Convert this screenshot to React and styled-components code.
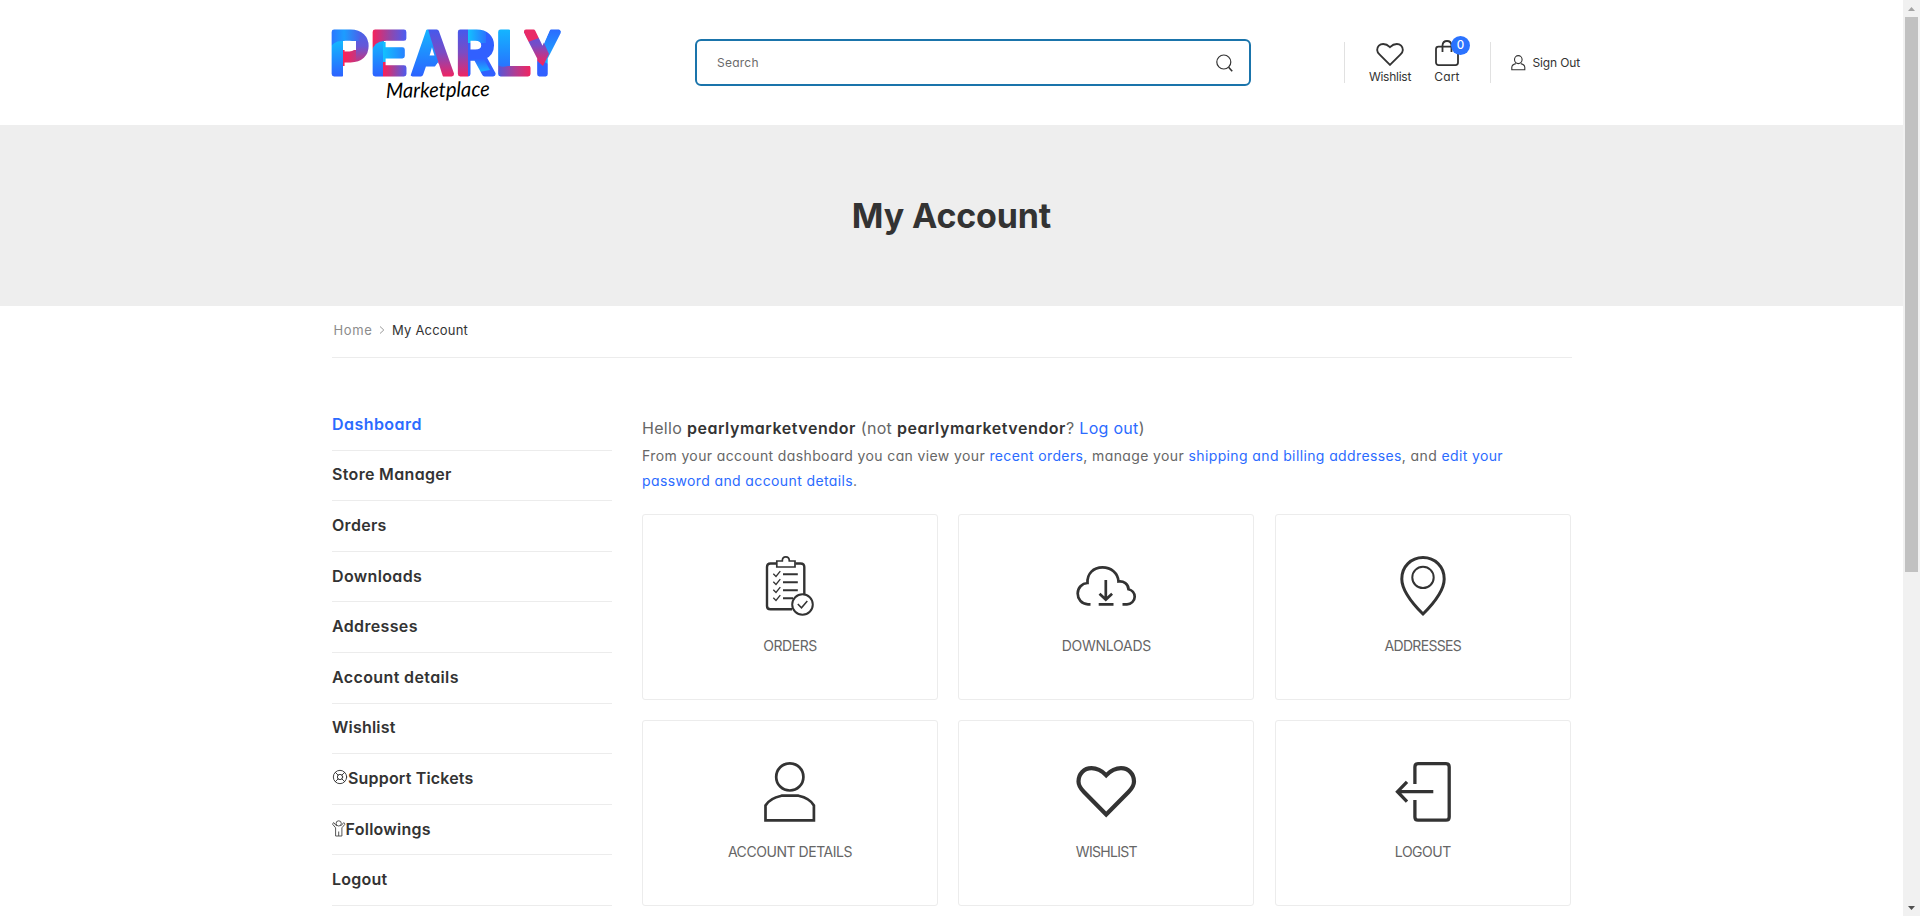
import React from "react";
import styled, { createGlobalStyle } from "styled-components";
import { LifeBuoy } from "lucide-react";

const GlobalStyle = createGlobalStyle`
  * { box-sizing: border-box; }
  html, body { margin: 0; height: 100%; overflow: hidden; background: #fff; }
  body {
    font-family: Inter, "Liberation Sans", sans-serif;
    font-feature-settings: "cv11";
    color: #666;
  }
  a { color: #2b6bff; text-decoration: none; }
`;

const Viewport = styled.div`
  display: flex;
  height: 916px;
  overflow: hidden;
`;

const Page = styled.div`
  flex: 1;
  min-width: 0;
`;

const Header = styled.header`
  display: flex;
  align-items: center;
  height: 125px;
  padding-left: 332px;
`;

const LogoArt = styled.svg`
  display: block;
  flex: none;
  width: 234px;
  height: 80px;
  margin-top: 11px;
  overflow: visible;
`;

const SearchBox = styled.div`
  display: flex;
  align-items: center;
  justify-content: space-between;
  width: 556px;
  height: 47px;
  margin-left: 129px;
  padding: 0 16px 0 20px;
  border: 2px solid #1a74ab;
  border-radius: 6px;
  font-size: 12px;
  letter-spacing: 0.25px;
  color: #6a6a6a;
`;

const Separator = styled.span`
  width: 1px;
  height: 41px;
  margin-left: ${(p) => p.$gap}px;
  background: #e1e1e1;
`;

const HeaderAction = styled.div`
  display: flex;
  flex-direction: column;
  align-items: center;
  width: ${(p) => p.$width}px;
  margin-left: ${(p) => p.$gap}px;
`;

const ActionIcon = styled.div`
  position: relative;
  display: flex;
  align-items: flex-end;
  height: 26px;
`;

const ActionLabel = styled.span`
  margin-top: 3px;
  font-size: 12px;
  line-height: 16px;
  letter-spacing: ${(p) => p.$spacing}px;
  color: #333;
  white-space: nowrap;
`;

const Badge = styled.span`
  position: absolute;
  top: -4px;
  right: -11px;
  width: 19px;
  height: 19px;
  border-radius: 50%;
  background: #2b73ff;
  color: #fff;
  font-size: 11.5px;
  font-weight: 500;
  line-height: 19px;
  text-align: center;
`;

const SignOut = styled.div`
  display: flex;
  align-items: center;
  gap: 6.5px;
  margin-left: 20px;
  font-size: 12px;
  letter-spacing: -0.15px;
  color: #333;
  white-space: nowrap;
`;

const Banner = styled.section`
  display: flex;
  align-items: center;
  justify-content: center;
  height: 181px;
  background: #eee;
`;

const Title = styled.h1`
  margin: 1px 0 0;
  font-size: 34px;
  font-weight: 700;
  line-height: 40px;
  letter-spacing: -0.15px;
  color: #333;
`;

const Container = styled.div`
  width: 1240px;
  margin-left: 332px;
`;

const Breadcrumb = styled.nav`
  display: flex;
  align-items: center;
  height: 52px;
  padding: 0 0 3px 1.5px;
  border-bottom: 1px solid #ececec;
  font-size: 13px;
`;

const Crumb = styled.span`
  letter-spacing: ${(p) => (p.$current ? 0.2 : 0.65)}px;
  color: ${(p) => (p.$current ? "#333" : "#8c8c8c")};
`;

const CrumbArrow = styled.svg`
  width: 6px;
  height: 8px;
  margin: 0 7.5px 0 6px;
`;

const Columns = styled.div`
  display: flex;
  padding-top: 42.1px;
`;

const SideNav = styled.nav`
  width: 280px;
  margin-right: 30px;
`;

const NavItem = styled.div`
  display: flex;
  align-items: center;
  height: 50.58px;
  padding-bottom: 2px;
  border-bottom: 1px solid #ececec;
  font-size: 16px;
  font-weight: 600;
  letter-spacing: ${(p) => p.$spacing}px;
  color: ${(p) => (p.$active ? "#2b6bff" : "#333")};
  svg { margin-top: -1px; }
`;

const Content = styled.main`
  width: 929px;
  padding-top: 14.9px;
`;

const Greeting = styled.p`
  margin: 0;
  font-size: 16px;
  line-height: 27px;
  letter-spacing: 0.3px;
  strong {
    font-weight: 600;
    letter-spacing: 0.54px;
    color: #333;
  }
`;

const Intro = styled.p`
  margin: 1px 0 21px;
  font-size: 14px;
  line-height: 25px;
  letter-spacing: 0.38px;
`;

const CardGrid = styled.div`
  display: grid;
  grid-template-columns: repeat(3, 296px);
  gap: 20px 20.4px;
`;

const Card = styled.div`
  display: flex;
  flex-direction: column;
  align-items: center;
  height: 186px;
  padding-top: 41px;
  border: 1px solid #ececec;
  border-radius: 3px;
`;

const CardIcon = styled.svg`
  width: 60px;
  height: 60px;
  overflow: visible;
  fill: none;
  stroke: #333;
  stroke-width: ${(p) => p.$stroke};
`;

const CardLabel = styled.span`
  margin-top: 20px;
  font-size: 14px;
  line-height: 20px;
  letter-spacing: ${(p) => p.$spacing}px;
  color: #666;
`;

const Scrollbar = styled.aside`
  display: flex;
  flex-direction: column;
  align-items: center;
  width: 17px;
  background: #f1f1f1;
`;

const ScrollArrow = styled.svg`
  width: 17px;
  height: 17px;
  fill: ${(p) => (p.$dim ? "#a3a3a3" : "#505050")};
`;

const ScrollThumb = styled.div`
  width: 13px;
  height: 555px;
  margin-bottom: auto;
  background: #c1c1c1;
`;

const gradients = [
  ["blueDown", 0, 1, ["#12bdff", "#1f8dff", "#2f5cff"]],
  ["pTop", 1, 0, ["#2f6bff", "#1c9dff", "#4a62ea"]],
  ["pBowl", 0, 1, ["#3f66ee", "#6558d8", "#e02a67"]],
  ["redBlue", 1, 0, ["#ff1f55", "#9347a8", "#3f60ff"]],
  ["cyanBlue", 1, 0, ["#12c2ff", "#2b74ff"]],
  ["blueRed", 0, 1, ["#3a5cf5", "#7a4cc4", "#ff1f55"]],
  ["redDiag", 1, 0, ["#ff1f55", "#bb3a88"]],
  ["purpleRed", 1, 0, ["#4f58dd", "#b23d92", "#ff1f55"]],
  ["blueCyan", 0, 1, ["#2f62ff", "#18b4ff"]],
];

const logoLetters = [
  ["P", -2.2, 39],
  ["E", 38.8, 36.7],
  ["A", 79.3, 41.8],
  ["R", 123.9, 38.6],
  ["L", 164.3, 34.2],
  ["Y", 192.8, 35.3],
];

function Logo() {
  return (
    <LogoArt viewBox="0 0 234 80">
      <defs>
        {gradients.map(([id, x2, y2, stops]) => (
          <linearGradient key={id} id={id} x1="0" y1="0" x2={x2} y2={y2}>
            {stops.map((c, i) => (
              <stop key={c} offset={i / (stops.length - 1)} stopColor={c} />
            ))}
          </linearGradient>
        ))}
        <pattern id="ribbon" patternUnits="userSpaceOnUse" x="-4" y="-4" width="244" height="60" viewBox="-4 -4 244 60">
          <rect x="-4" y="11" width="15" height="40" fill="url(#blueDown)" />
          <rect x="11" y="22" width="15" height="16" fill="url(#redDiag)" />
          <rect x="24" y="-2" width="15" height="40" fill="url(#pBowl)" />
          <path d="M-4 -4H26Q30 6 27 13H11Q2 12 -4 22Z" fill="url(#pTop)" />
          <rect x="39" y="10" width="13" height="41" fill="url(#blueDown)" />
          <rect x="51" y="14" width="26" height="20" fill="url(#cyanBlue)" />
          <rect x="51" y="34" width="26" height="17" fill="url(#redBlue)" />
          <path d="M39 -3H77V13H52Q43 13 39 24Z" fill="url(#redBlue)" />
          <path d="M77 52L96 -3H104L110 28L94 52Z" fill="url(#blueDown)" />
          <path d="M95 -3H108L125 52H112L98 8Z" fill="url(#blueRed)" />
          <rect x="125" y="-3" width="12" height="55" fill="url(#blueRed)" />
          <path d="M136 -3H165V52H136Z" fill="#3160ff" />
          <rect x="136" y="-3" width="18" height="18" fill="url(#cyanBlue)" />
          <path d="M139 31H152L158 42L147 44Z" fill="url(#blueCyan)" />
          <rect x="165" y="-3" width="13" height="55" fill="url(#blueDown)" />
          <path d="M165 36Q168 40 176 38H202V52H172Q165 46 165 36Z" fill="url(#purpleRed)" />
          <rect x="202" y="22" width="18" height="30" fill="#3160ff" />
          <path d="M206 30L220 -3H234V8L216 36Z" fill="url(#blueCyan)" />
          <path d="M189 -3H204L217 26L211 38L202 30Z" fill="url(#blueRed)" />
          <path d="M189 -3H203L207 10L196 14Z" fill="#e92b67" />
        </pattern>
      </defs>
      <g
        fontFamily="Inter, sans-serif"
        fontWeight="600"
        fontSize="58"
        fill="url(#ribbon)"
        stroke="url(#ribbon)"
        strokeWidth="4.8"
        strokeLinejoin="round"
      >
        {logoLetters.map(([ch, x, w]) => (
          <text key={ch} x={x} y="46.2" textLength={w} lengthAdjust="spacingAndGlyphs">
            {ch}
          </text>
        ))}
      </g>
      <text
        x="54"
        y="70"
        fontFamily="Lato, sans-serif"
        fontStyle="italic"
        fontSize="21"
        fill="#000"
        textLength="104"
        lengthAdjust="spacingAndGlyphs"
        transform="rotate(-1 54 70)"
      >
        Marketplace
      </text>
    </LogoArt>
  );
}

const HEART =
  "M30.2 52.5L8 30C4.5 26.5 2.5 23.5 2.5 19.5C2.5 12 8 6.2 15.5 6.2C21.5 6.2 26 9 30.2 13.2C34.5 9 39 6.2 45 6.2C52.5 6.2 58 12 58 19.5C58 23.5 56 26.5 52.5 30Z";

const cards = [
  {
    label: "ORDERS",
    spacing: -0.45,
    stroke: 2.4,
    art: (
      <>
        <path d="M16 7.5H10.5Q7 7.5 7 11V50Q7 53.3 10.5 53.3H32M35.5 7.5H40.5Q44.3 7.5 44.3 11V38" />
        <path d="M16.8 5H22.3C22.3 2.5 23.5 .9 25.8 .9S29.3 2.5 29.3 5H35V11H16.8Z" strokeWidth="1.7" />
        <path d="M23 18.2H37.8M23 26.2H37.8M23 34.2H37.8M23 42.2H33" strokeWidth="1.9" />
        <path d="M13.3 17.8L16 20.5L20.3 15.2M13.3 25.8L16 28.5L20.3 23.2M13.3 33.8L16 36.5L20.3 31.2M13.3 41.8L16 44.5L20.3 39.2" strokeWidth="1.3" />
        <circle cx="42.5" cy="48.5" r="10.3" strokeWidth="2" />
        <path d="M37.8 48L41.5 51.8L47.3 45" strokeWidth="1.5" />
      </>
    ),
  },
  {
    label: "DOWNLOADS",
    spacing: -0.25,
    stroke: 2.7,
    art: (
      <>
        <path d="M14.5 48.3H12C5.5 48.3 1.7 43 1.7 37.5C1.7 31.5 6 27.5 11.5 27C11 17.5 17.5 11.4 26.5 11.4C35 11.4 42 17 42.5 25.5C47.5 24.8 52.5 28 52.5 33.2C56 34 58.7 37 58.7 40.8C58.7 45 55 48.3 51 48.3H46.5" />
        <path d="M29.8 24V43M23.5 37.8L29.8 43.6L36.1 37.8M22.7 48.3H37.5" />
      </>
    ),
  },
  {
    label: "ADDRESSES",
    spacing: -0.7,
    stroke: 3,
    art: (
      <>
        <path d="M30 58C22 50 8.8 35 8.8 22.9C8.8 10.7 18 1.6 30 1.6S51.2 10.7 51.2 22.9C51.2 35 38 50 30 58Z" />
        <circle cx="30" cy="21.4" r="10.7" strokeWidth="2" />
      </>
    ),
  },
  {
    label: "ACCOUNT DETAILS",
    spacing: -0.45,
    stroke: 2.7,
    art: (
      <>
        <circle cx="29.8" cy="14.9" r="13.6" />
        <path d="M5.5 58.3V43.5C8 39 13 35.5 21.5 33.7H38.5C47 35.5 51.5 39 53.9 43.5V58.3Z" />
      </>
    ),
  },
  {
    label: "WISHLIST",
    spacing: -0.7,
    stroke: 4.2,
    art: <path d={HEART} />,
  },
  {
    label: "LOGOUT",
    spacing: -0.5,
    stroke: 3.3,
    art: (
      <>
        <path d="M21.9 22V5Q21.9 1.7 25 1.7H53Q56.2 1.7 56.2 5V55Q56.2 58.2 53 58.2H25Q21.9 58.2 21.9 55V38" />
        <path d="M40.3 29.7H4.5M14 19.8L4.5 29.7L14 39.6" />
      </>
    ),
  },
];

const FollowIcon = () => (
  <svg width="13.5" height="17" viewBox="0 0 13.5 17" fill="none" stroke="#444" strokeWidth=".9">
    <circle cx="6.7" cy="3.4" r="2.6" />
    <path d="M5 5.6H4.2L1.8 2.6Q.6 3 .7 4.4L3.6 7.8V16H9.9V7.8L12.8 4.4Q12.8 3 11.7 2.6L9.2 5.6H8.4M6.7 11.5V16" />
  </svg>
);

const navItems = [
  ["Dashboard", 0.45],
  ["Store Manager", 0.33],
  ["Orders", 0.3],
  ["Downloads", 0.35],
  ["Addresses", 0.35],
  ["Account details", 0.38],
  ["Wishlist", 0.2],
  ["Support Tickets", 0.18, <LifeBuoy key="i" size={16} strokeWidth={1.4} />],
  ["Followings", 0.27, <FollowIcon key="i" />],
  ["Logout", 0.25],
];

export default function App() {
  return (
    <Viewport>
      <GlobalStyle />
      <Page>
        <Header>
          <Logo />
          <SearchBox>
            <span>Search</span>
            <svg width="17" height="18" viewBox="0 0 17 18" fill="none" stroke="#333" strokeWidth="1.2">
              <circle cx="7.8" cy="8" r="7" />
              <path d="M12.6 13.2L16.2 17.2" strokeWidth="1.6" />
            </svg>
          </SearchBox>
          <Separator $gap={93} />
          <HeaderAction $width={43} $gap={23.5}>
            <ActionIcon>
              <svg width="28" height="23" viewBox="0 4 60.5 51" preserveAspectRatio="none" fill="none" stroke="#333" strokeWidth="4">
                <path d={HEART} />
              </svg>
            </ActionIcon>
            <ActionLabel $spacing={-0.25}>Wishlist</ActionLabel>
          </HeaderAction>
          <HeaderAction $width={26} $gap={22.5}>
            <ActionIcon>
              <svg width="24" height="26" viewBox="0 0 24 26" fill="none" stroke="#333" strokeWidth="1.8">
                <rect x="1" y="6.7" width="22" height="18.4" rx="2.5" />
                <path d="M7.5 12V5.5Q7.8 1 12 1T16.5 5.5V12" />
              </svg>
              <Badge>0</Badge>
            </ActionIcon>
            <ActionLabel $spacing={0.15}>Cart</ActionLabel>
          </HeaderAction>
          <Separator $gap={30} />
          <SignOut>
            <svg width="15" height="16" viewBox="0 0 15 16" fill="none" stroke="#333" strokeWidth="1.1">
              <ellipse cx="7.3" cy="4.6" rx="3.8" ry="4" />
              <path d="M4.8 8.6Q1 9.6 .8 12.2V14.8H13.8V12.2Q13.6 9.6 9.8 8.6" />
            </svg>
            <span>Sign Out</span>
          </SignOut>
        </Header>

        <Banner>
          <Title>My Account</Title>
        </Banner>

        <Container>
          <Breadcrumb>
            <Crumb>Home</Crumb>
            <CrumbArrow viewBox="0 0 6 8" fill="none" stroke="#999">
              <path d="M1 .5L4.8 4L1 7.5" />
            </CrumbArrow>
            <Crumb $current>My Account</Crumb>
          </Breadcrumb>

          <Columns>
            <SideNav>
              {navItems.map(([label, spacing, icon], i) => (
                <NavItem key={label} $spacing={spacing} $active={i === 0}>
                  {icon}
                  <span>{label}</span>
                </NavItem>
              ))}
            </SideNav>

            <Content>
              <Greeting>
                Hello <strong>pearlymarketvendor</strong> (not <strong>pearlymarketvendor</strong>?{" "}
                <a>Log out</a>)
              </Greeting>
              <Intro>
                From your account dashboard you can view your <a>recent orders</a>, manage your{" "}
                <a>shipping and billing addresses</a>, and <a>edit your</a>
                <br />
                <a>password and account details</a>.
              </Intro>
              <CardGrid>
                {cards.map((card) => (
                  <Card key={card.label}>
                    <CardIcon viewBox="0 0 60 60" $stroke={card.stroke}>
                      {card.art}
                    </CardIcon>
                    <CardLabel $spacing={card.spacing}>{card.label}</CardLabel>
                  </Card>
                ))}
              </CardGrid>
            </Content>
          </Columns>
        </Container>
      </Page>

      <Scrollbar>
        <ScrollArrow $dim viewBox="0 0 17 17">
          <path d="M5 11L8.5 7L12 11Z" />
        </ScrollArrow>
        <ScrollThumb />
        <ScrollArrow viewBox="0 0 17 17">
          <path d="M5 7L8.5 11L12 7Z" />
        </ScrollArrow>
      </Scrollbar>
    </Viewport>
  );
}
